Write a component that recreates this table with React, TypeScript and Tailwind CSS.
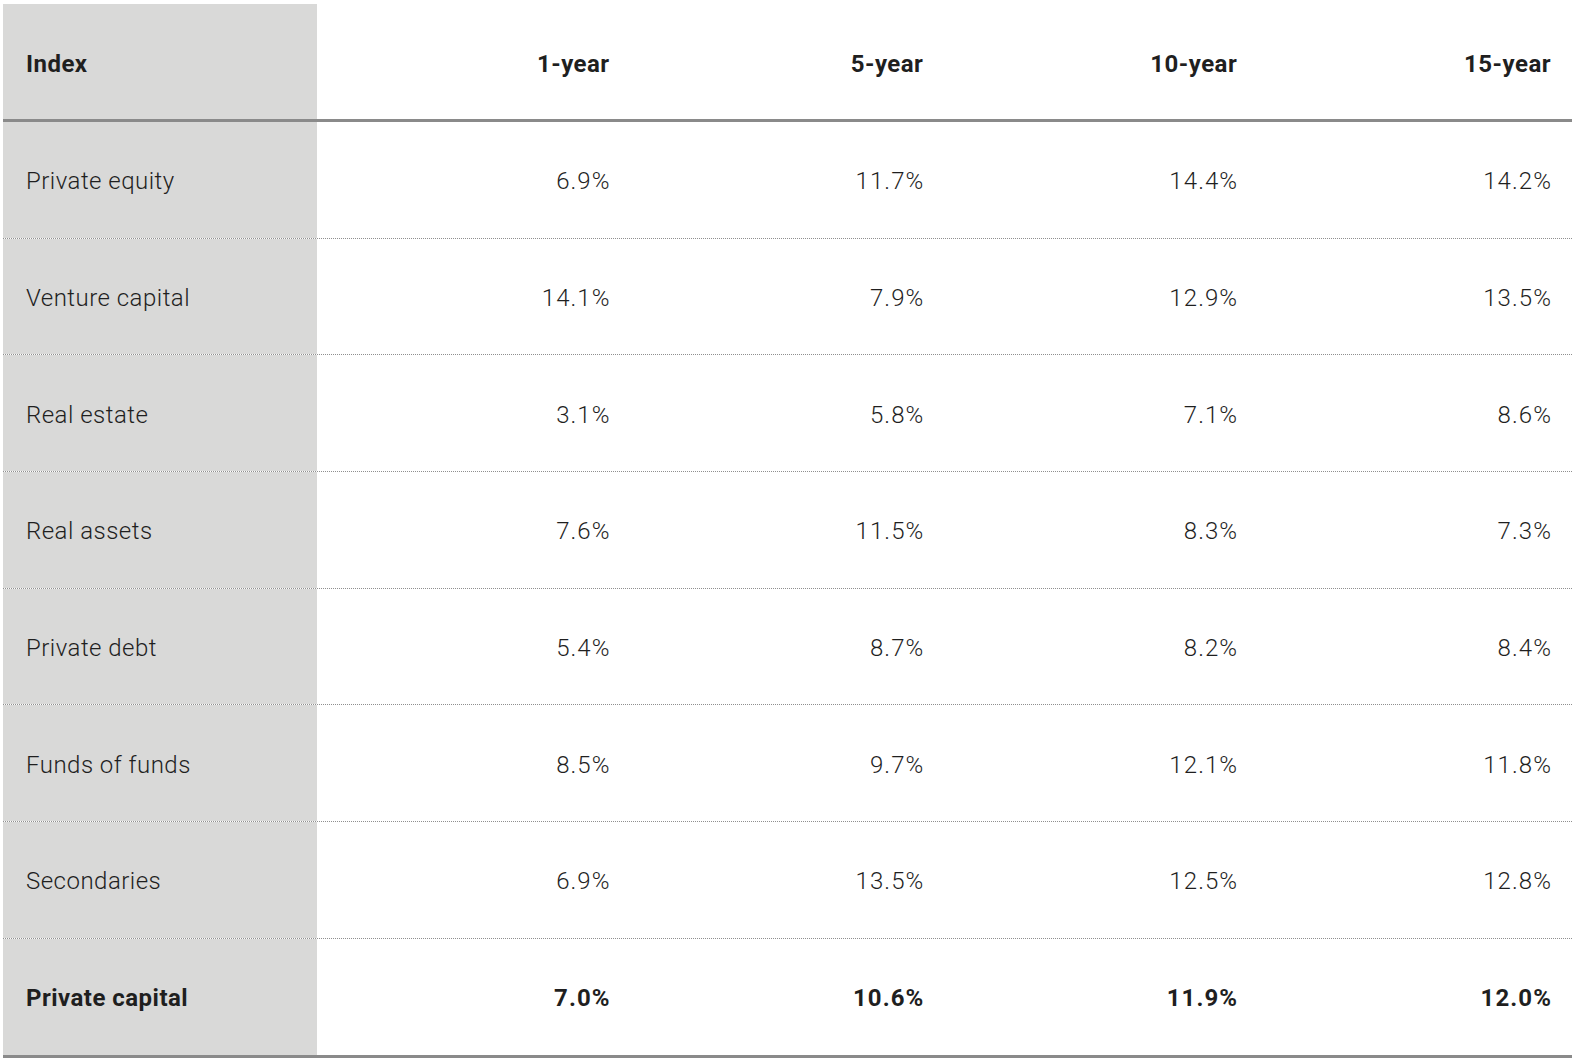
import React from "react";

type Row = {
  name: string;
  values: string[];
  total?: boolean;
};

const headers = ["1-year", "5-year", "10-year", "15-year"];

const rows: Row[] = [
  { name: "Private equity", values: ["6.9%", "11.7%", "14.4%", "14.2%"] },
  { name: "Venture capital", values: ["14.1%", "7.9%", "12.9%", "13.5%"] },
  { name: "Real estate", values: ["3.1%", "5.8%", "7.1%", "8.6%"] },
  { name: "Real assets", values: ["7.6%", "11.5%", "8.3%", "7.3%"] },
  { name: "Private debt", values: ["5.4%", "8.7%", "8.2%", "8.4%"] },
  { name: "Funds of funds", values: ["8.5%", "9.7%", "12.1%", "11.8%"] },
  { name: "Secondaries", values: ["6.9%", "13.5%", "12.5%", "12.8%"] },
  { name: "Private capital", values: ["7.0%", "10.6%", "11.9%", "12.0%"], total: true },
];

export default function App() {
  return (
    <div
      className="bg-white min-h-screen pl-[3px] pt-[4px] text-[#1f1f1f]"
      style={{ fontFamily: "Roboto, 'Liberation Sans', Arial, sans-serif" }}
    >
      <div className="w-[1569px]">
        {/* header */}
        <div className="grid grid-cols-5 h-[118px] border-b-[3px] border-[#8a8a8a] text-[24px] font-bold tracking-[0.02em]">
          <div className="bg-[#d9d9d8] flex items-center px-[23px] pt-[5px]">Index</div>
          {headers.map((h) => (
            <div key={h} className="flex items-center justify-end pl-[23px] pr-[21px] pt-[5px]">
              {h}
            </div>
          ))}
        </div>

        {rows.map((r, i) => {
          const last = i === rows.length - 1;
          return (
            <div
              key={r.name}
              className={
                "grid grid-cols-5 text-[24px] tracking-[0.02em] " +
                (r.total ? "font-bold " : "font-light ") +
                (last
                  ? "h-[118.7px] border-b-[3px] border-[#8a8a8a]"
                  : "h-[116.7px] border-b border-dotted border-[#8f8f8f]")
              }
            >
              <div className="bg-[#d9d9d8] flex items-center px-[23px] pt-[3px]">{r.name}</div>
              {r.values.map((v, j) => (
                <div
                  key={j}
                  className="flex items-center justify-end pl-[23px] pr-[20px] pt-[3px] tracking-[0.045em]"
                >
                  {v}
                </div>
              ))}
            </div>
          );
        })}
      </div>
    </div>
  );
}
